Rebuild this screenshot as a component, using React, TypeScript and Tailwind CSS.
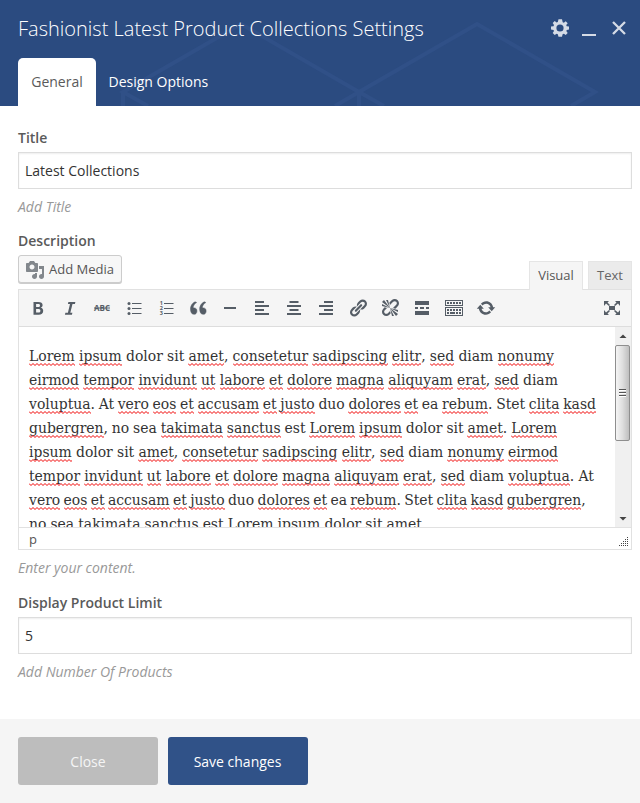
import React from 'react';

const sans = "font-['Open_Sans',sans-serif]";

type Line = { width: string; text: string };

// Words wrapped in underscores are flagged by the spell checker.
const lines: Line[] = [
  { width: 'w-[525px]', text: '_Lorem_ _ipsum_ dolor sit _amet_, _consetetur_ _sadipscing_ _elitr_, _sed_ diam _nonumy_' },
  { width: 'w-[529px]', text: '_eirmod_ _tempor_ _invidunt_ _ut_ _labore_ _et_ _dolore_ _magna_ _aliquyam_ _erat_, _sed_ diam' },
  { width: 'w-[567px]', text: '_voluptua_. At _vero_ _eos_ _et_ _accusam_ _et_ _justo_ duo _dolores_ _et_ ea _rebum_. Stet _clita_ _kasd_' },
  { width: 'w-[528px]', text: '_gubergren_, no sea _takimata_ _sanctus_ est _Lorem_ _ipsum_ dolor sit _amet_. _Lorem_' },
  { width: 'w-[529px]', text: '_ipsum_ dolor sit _amet_, _consetetur_ _sadipscing_ _elitr_, _sed_ diam _nonumy_ _eirmod_' },
  { width: 'w-[565px]', text: '_tempor_ _invidunt_ _ut_ _labore_ _et_ _dolore_ _magna_ _aliquyam_ _erat_, _sed_ diam _voluptua_. At' },
  { width: 'w-[557px]', text: '_vero_ _eos_ _et_ _accusam_ _et_ _justo_ duo _dolores_ _et_ ea _rebum_. Stet _clita_ _kasd_ _gubergren_,' },
  { width: 'w-[393px]', text: 'no sea takimata sanctus est Lorem ipsum dolor sit amet' },
];

const zigzag = 'M0 0.5' + 'l2 2l2 -2'.repeat(30);

function Prose({ line }: { line: Line }) {
  return (
    <div className={`${line.width} flex h-6 justify-between leading-6 whitespace-nowrap`}>
      {line.text.split(' ').map((word, i) => {
        const m = word.match(/^_(.+)_(.*)$/);
        if (!m) return <span key={i}>{word}</span>;
        return (
          <span key={i}>
            <span className="relative inline-block">
              {m[1]}
              <svg className="absolute top-[19px] left-0 h-[3px] w-full overflow-hidden">
                <path d={zigzag} fill="none" stroke="#f00000" strokeWidth="1" />
              </svg>
            </span>
            {m[2]}
          </span>
        );
      })}
    </div>
  );
}

function Field({ label, value, hint }: { label: string; value: string; hint: string }) {
  return (
    <div>
      <div className="h-6 text-[14px] leading-6 font-semibold text-[#5a5a5a]">{label}</div>
      <div className="mt-[2px] h-[37px] border border-[#ddd] bg-white px-1.5 text-[14px] leading-[35px] text-[#333] shadow-[inset_0_1px_2px_rgba(0,0,0,0.07)]">
        {value}
      </div>
      <div className="mt-2 h-5 text-[14px] leading-5 text-[#999] italic">{hint}</div>
    </div>
  );
}

function Icon({ children }: { children: React.ReactNode }) {
  return (
    <svg width="20" height="20" viewBox="0 0 20 20" className="shrink-0" fill="#555d66">
      {children}
    </svg>
  );
}

const link =
  'M17.74 2.76c1.68 1.69 1.68 4.41 0 6.1l-1.53 1.52c-1.12 1.12-2.7 1.47-4.14 1.09l2.62-2.61.76-.77.76-.76c.84-.84.84-2.2 0-3.04-.84-.85-2.2-.85-3.04 0l-.77.76-3.38 3.38c-.37-1.44-.02-3.02 1.1-4.14l1.52-1.53c1.69-1.68 4.42-1.68 6.1 0zM8.59 13.43l5.34-5.34c.42-.42.42-1.1 0-1.52-.44-.43-1.13-.39-1.53 0l-5.33 5.34c-.42.42-.42 1.1 0 1.52.44.43 1.13.39 1.52 0zm-.76 2.29l4.14-4.15c.38 1.44.03 3.02-1.09 4.14l-1.52 1.53c-1.69 1.68-4.41 1.68-6.1 0-1.68-1.68-1.68-4.42 0-6.1l1.53-1.52c1.12-1.12 2.7-1.47 4.14-1.1l-4.14 4.15c-.85.84-.85 2.2 0 3.05.84.84 2.2.84 3.04 0z';

function Toolbar() {
  return (
    <div className="flex h-[37px] items-center justify-between border-b border-[#ddd] bg-[#f5f5f5] pr-[9px] pl-[9px]">
      <div className="flex gap-3">
        <Icon>
          <path fillRule="evenodd" d="M5.500 4H10.200C13.200 4 14.600 5.200 14.600 7.100C14.600 8.500 13.900 9.300 12.700 9.700C14.300 10 15.200 11.100 15.200 12.700C15.200 15.100 13.500 16.700 10.600 16.700H5.500ZM8.100 6V8.900H10C11.300 8.900 12 8.400 12 7.400C12 6.400 11.300 6 10 6ZM8.100 10.900V14.600H10.300C11.700 14.600 12.400 13.900 12.400 12.700C12.400 11.500 11.600 10.900 10.200 10.900Z" />
        </Icon>
        <Icon>
          <path d="M15.400 4h-7l-.5 2.100h2.100L7.900 14.700H5.400l-.5 2h7l.5-2h-2.100L12.500 6.100h2.400z" />
        </Icon>
        <Icon>
          <text x="2" y="13" fontSize="8" fontWeight="700" fontFamily="Open Sans" textLength="16">ABC</text>
          <path d="M2 9.500H18V10.500H2Z" />
        </Icon>
        <Icon>
          <path d="M8 5H17.500V6H8ZM8 10H17.500V11H8ZM8 15H17.500V16H8Z" />
          <circle cx="5" cy="5.500" r="1.500" /><circle cx="5" cy="10.500" r="1.500" /><circle cx="5" cy="15.500" r="1.500" />
        </Icon>
        <Icon>
          <path d="M8 5H17.500V6H8ZM8 10H17.500V11H8ZM8 15H17.500V16H8Z" />
          <g fontSize="5.500" fontWeight="700" fontFamily="Open Sans">
            <text x="3.700" y="7">1</text><text x="3.700" y="12.200">2</text><text x="3.700" y="17.200">3</text>
          </g>
        </Icon>
        <Icon>
          <path transform="translate(.4 .3)" d="M8.540 12.740c0-.87-.24-1.610-.72-2.220-.73-.92-2.140-1.030-2.960-.85-.34-1.930 1.300-4.390 3.420-5.450L6.650 3.500C3.800 4.810 1.800 7.840 2.100 11.380 2.390 14.620 3.600 16 5.700 16c.83 0 1.510-.29 2.040-.88.54-.59.8-1.380.8-2.380zm9.190 0c0-.87-.24-1.610-.72-2.220-.74-.92-2.140-1.030-2.960-.85-.34-1.930 1.290-4.390 3.420-5.450l-1.630-.72c-2.850 1.310-4.850 4.340-4.550 7.880.29 3.240 1.500 4.620 3.600 4.620.83 0 1.510-.29 2.040-.88.54-.59.8-1.380.8-2.380z" stroke="#555d66" strokeWidth=".5" />
        </Icon>
        <Icon><path d="M4 9H16V11H4Z" /></Icon>
        <Icon><path d="M3 3H12V5H3ZM3 7H17V9H3ZM3 11H12V13H3ZM3 15H17V17H3Z" /></Icon>
        <Icon><path d="M5.500 3H14.500V5H5.500ZM3 7H17V9H3ZM5.500 11H14.500V13H5.500ZM3 15H17V17H3Z" /></Icon>
        <Icon><path d="M8 3H17V5H8ZM3 7H17V9H3ZM8 11H17V13H8ZM3 15H17V17H3Z" /></Icon>
        <Icon><path d={link} /></Icon>
        <Icon>
          <path d="M17.740 2.260c1.680 1.690 1.680 4.410 0 6.100l-1.530 1.520c-.32.33-.69.58-1.080.77L13 10l1.690-1.640.76-.77.76-.76c.84-.84.84-2.200 0-3.040-.84-.85-2.200-.85-3.040 0l-.77.76-.76.76L10 7l-.65-2.140c.19-.38.44-.75.77-1.070l1.520-1.530c1.690-1.680 4.420-1.680 6.100 0zM2 4l8 6-6-8zm4-2l4 8-2-8H6zM2 6l8 4-8-2V6zm7.360 7.690L10 13l.74 2.350-1.380 1.390c-1.690 1.680-4.410 1.680-6.100 0-1.680-1.680-1.680-4.420 0-6.100l1.390-1.380L7 10l-.69.640-1.520 1.530c-.85.840-.85 2.200 0 3.040.84.850 2.200.850 3.040 0zM18 16l-8-6 6 8zm-4 2l-4-8 2 8h2zm4-4l-8-4 8 2v2z" />
        </Icon>
        <Icon><path d="M3 3H17V7H3ZM3 9H6V11H3ZM8 9H12V11H8ZM14 9H17V11H14ZM3 13H17V17H3Z" /></Icon>
        <Icon>
          <path fillRule="evenodd" d="M1 2H19V8H1ZM2 3V7H18V3ZM1 9H19V18H1ZM2 10V17H18V10Z" />
          <path d="M3 4H5V6H3ZM6 4H8V6H6ZM9 4H11V6H9ZM12 4H14V6H12ZM15 4H17V6H15ZM3 11H5V13H3ZM6 11H8V13H6ZM9 11H11V13H9ZM12 11H14V13H12ZM15 11H17V13H15ZM3 14H5V16H3ZM6 14H11V16H6ZM12 14H14V16H12ZM15 14H17V16H15Z" />
        </Icon>
        <Icon>
          <path d="M10.200 3.280c3.530 0 6.430 2.610 6.920 6h2.080l-3.500 4-3.500-4h2.320c-.45-1.970-2.210-3.450-4.320-3.450-1.450 0-2.730.71-3.540 1.780L4.950 5.660C6.230 4.200 8.110 3.280 10.200 3.280zm-.4 13.440c-3.520 0-6.430-2.610-6.920-6H.8l3.500-4c1.170 1.330 2.330 2.670 3.500 4H5.480c.45 1.970 2.210 3.450 4.320 3.450 1.450 0 2.730-.71 3.540-1.780l1.710 1.950c-1.280 1.460-3.150 2.380-5.250 2.380z" />
        </Icon>
      </div>
      <Icon>
        <path d="M7 8H13V12H7ZM2 3H7L5.500 4.500L8 7L7 8L4 5.500L2 8ZM18 3H13L14.500 4.500L12 7L13 8L16 5.500L18 8ZM2 17H7L5.500 15.500L8 13L7 12L4 14.500L2 12ZM18 17H13L14.500 15.500L12 13L13 12L16 14.500L18 12Z" />
      </Icon>
    </div>
  );
}

function Scrollbar() {
  return (
    <div className="flex h-[200px] w-4 flex-col items-center bg-[#f0f0f0]">
      <div className="flex h-[18px] items-center">
        <svg width="8" height="4"><path d="M0.500 4L4 0.500L7.500 4Z" fill="#444" /></svg>
      </div>
      <div className="flex h-24 w-[15px] flex-col items-center justify-center gap-px self-start rounded-[2px] border border-[#8e8e8e] bg-gradient-to-r from-[#f5f5f5] via-[#dedede] to-[#bebebe]">
        <i className="h-0.5 w-[7px] border-b border-white bg-[#555]" />
        <i className="h-0.5 w-[7px] border-b border-white bg-[#555]" />
        <i className="h-0.5 w-[7px] border-b border-white bg-[#555]" />
      </div>
      <div className="mt-auto flex h-[17px] items-center">
        <svg width="8" height="4"><path d="M0.500 0L4 3.500L7.500 0Z" fill="#444" /></svg>
      </div>
    </div>
  );
}

function Grip() {
  const dots: [number, number][] = [];
  for (let r = 0; r < 5; r++) for (let c = 4 - r; c < 5; c++) dots.push([c * 2, r * 2]);
  return (
    <svg width="10" height="10" className="mb-0.5" shapeRendering="crispEdges">
      {dots.map(([x, y]) => <rect key={`${x}-${y}`} x={x} y={y} width="1" height="1" fill="#444" />)}
    </svg>
  );
}

export default function App() {
  return (
    <div className={`${sans} h-[803px] w-[640px] overflow-hidden bg-white`}>
      <header className="relative h-[106px] bg-[#2b4b80]">
        <svg className="absolute inset-0" width="640" height="106" fill="none" stroke="#305087" strokeWidth="4">
          <path d="M148 106L123 92L241 24L359 92L335 106M123 92V106M359 92V106M384 106L359 92L477 24L595 92L571 106" />
        </svg>
        <div className="relative flex h-[58px] items-center justify-between pr-[14px] pl-[18px]">
          <h1 className="text-[20px] leading-7 font-light whitespace-nowrap text-white">Fashionist Latest Product Collections Settings</h1>
          <div className="mb-0.5 flex items-center">
            <svg width="18" height="18" viewBox="0 0 18 18" fill="#d5dbe6">
              <path fillRule="evenodd" d="M18 10.500v-3l-2.300-.3-.5-1.200 1.500-1.800-2-2-1.800 1.500-1.200-.5L11 .2H7.500l-.7 2.700-1.200.6-1.900-1.400-2 2L3 6l-.5 1.200-2.500.3v3l2.500.5.5 1.100-1.300 1.900 2 2 1.900-1.300 1.200.5.7 2.600H11l.6-2.600 1.300-.5 1.800 1.300 2-2-1.400-1.900.5-1.100zM9 12.600a3.600 3.600 0 1 1 0-7.200 3.600 3.600 0 0 1 0 7.200z" />
            </svg>
            <div className="mt-[13px] ml-[13px] h-0.5 w-3.5 bg-[#d5dbe6]" />
            <svg className="ml-4" width="14" height="14" stroke="#d5dbe6" strokeWidth="2.300"><path d="M1 1L13 13M13 1L1 13" /></svg>
          </div>
        </div>
        <nav className="relative flex h-12 pl-[18px] text-[14px] leading-[48px]">
          <div className="w-[78px] rounded-t-[5px] bg-white text-center text-[#5a5a5a]">General</div>
          <div className="pl-[12.500px] text-white">Design Options</div>
        </nav>
      </header>

      <main className="h-[613px] pt-5 pr-2 pl-[18px]">
        <Field label="Title" value="Latest Collections" hint="Add Title" />
        <section className="mt-3">
          <div className="h-6 text-[14px] leading-6 font-semibold text-[#5a5a5a]">Description</div>
          <div className="flex h-9 items-start justify-between">
            <button className="mt-[2px] flex h-7 w-[104px] items-center gap-[5px] rounded-[3px] border border-[#ccc] bg-[#f7f7f7] pt-px pl-[7px] text-[13px] text-[#555] shadow-[0_1px_0_#ccc]">
              <svg width="18" height="18" viewBox="1 1 18 18" fill="#82878c">
                <path d="M13 11V4c0-.55-.45-1-1-1h-1.670L9 1H5L3.670 3H2c-.55 0-1 .45-1 1v7c0 .55.450 1 1 1h10c.55 0 1-.45 1-1zM7 4.500c1.380 0 2.500 1.120 2.500 2.500S8.380 9.500 7 9.500 4.500 8.380 4.500 7 5.620 4.500 7 4.500zM14 6h5v10.500c0 1.380-1.120 2.500-2.500 2.500S14 17.880 14 16.500s1.120-2.500 2.500-2.500c.17 0 .34.020.5.050V9h-3V6zm-4 8.050V13h2v3.500c0 1.380-1.120 2.500-2.500 2.500S7 17.880 7 16.500 8.120 14 9.500 14c.17 0 .34.020.5.050z" />
              </svg>
              Add Media
            </button>
            <div className="relative z-10 mt-2 flex gap-[5px] text-center text-[13px] leading-[27px]">
              <div className="h-[29px] w-[54px] border border-b-0 border-[#e5e5e5] bg-[#f5f5f5] text-[#555]">Visual</div>
              <div className="h-7 w-11 border border-b-0 border-[#e5e5e5] bg-[#ebebeb] text-[#666]">Text</div>
            </div>
          </div>
          <div className="h-[261px] border border-[#e1e1e1]">
            <Toolbar />
            <div className="flex h-[200px] justify-between overflow-hidden">
              <div className="pt-[17px] pl-2.5 font-['DejaVu_Serif_Condensed','DejaVu_Serif',serif] text-[15.500px] text-[#333] [font-stretch:condensed]">
                {lines.map((line, i) => <Prose key={i} line={line} />)}
              </div>
              <Scrollbar />
            </div>
            <div className="flex h-[22px] items-end justify-between border-t border-[#e1e1e1] pr-0.5 pl-2.5">
              <span className="text-[13px] leading-[20px] text-[#555]">p</span>
              <Grip />
            </div>
          </div>
          <div className="mt-2 h-5 text-[14px] leading-5 text-[#999] italic">Enter your content.</div>
        </section>
        <div className="mt-[13px]">
          <Field label="Display Product Limit" value="5" hint="Add Number Of Products" />
        </div>
      </main>

      <footer className="flex h-[84px] gap-2.5 bg-[#f5f5f5] pt-[18px] pl-[18px] text-[14px]">
        <button className="h-12 w-[140px] rounded-[3px] bg-[#bdbdbd] text-[#f5f5f5]">Close</button>
        <button className="h-12 w-[140px] rounded-[3px] bg-[#305288] pr-px text-white">Save changes</button>
      </footer>
    </div>
  );
}
